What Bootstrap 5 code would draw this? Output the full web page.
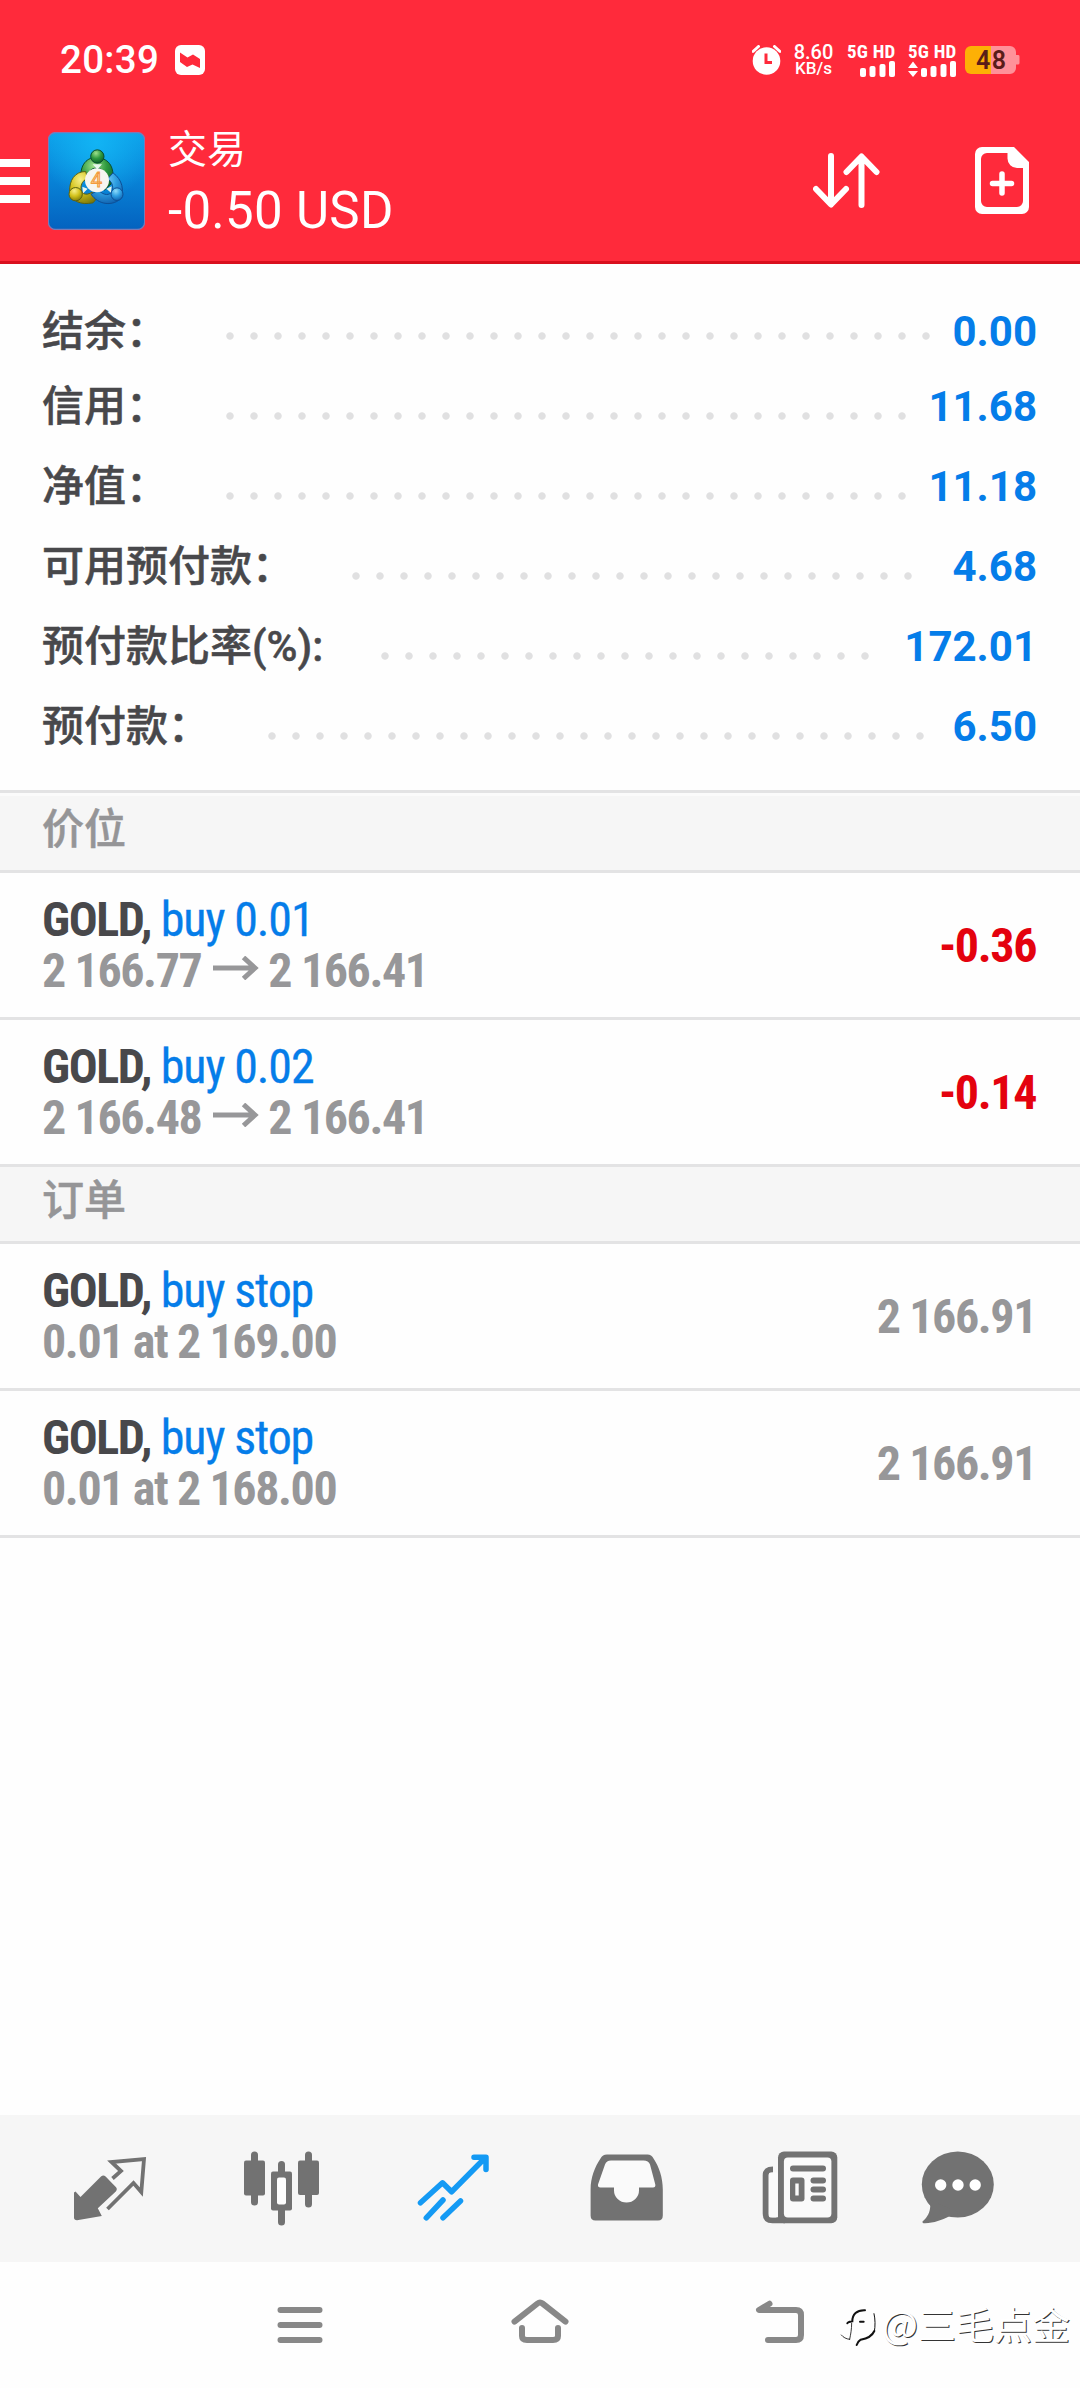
<!DOCTYPE html>
<html lang="zh-CN">
<head>
<meta charset="utf-8">
<meta name="viewport" content="width=device-width, initial-scale=1">
<title>交易</title>
<link href="https://cdn.jsdelivr.net/npm/bootstrap@5.3.0/dist/css/bootstrap.min.css" rel="stylesheet">
<style>
  :root { --brand: #ff2a3b; --ink: #48484b; --muted: #979799; --blue: #057de9; --line: #e3e3e4; --panel: #f6f6f6; }
  body { font-family: Roboto, "Noto Sans CJK SC", sans-serif; background: #fefefe; color: var(--ink); }
  svg { display: block; flex: none; }
  .app-head { background: var(--brand); height: 264px; border-bottom: 3px solid #d90f1e; }
  .status { height: 110px; padding: 9px 60px 0; }
  .clock { font-size: 38.5px; line-height: 40px; font-weight: 500; letter-spacing: .3px; margin-right: 16px; }
  .net { width: 41px; margin: 0 13px 0 12px; font-size: 20px; line-height: 16px; font-weight: 500; }
  .net-unit { font-size: 17px; line-height: 16px; }
  .sig { width: 49px; font-family: "Roboto Condensed", Roboto, sans-serif; font-size: 19px; letter-spacing: .2px; line-height: 17px; font-weight: 700; }
  .sig svg { margin-top: 1px; }
  .toolbar { height: 141px; padding-right: 51px; }
  .app-logo { margin: 0 23px 0 18px; }
  .new-order { margin-left: 95px; }
  .title-a { font-size: 39px; height: 60px; line-height: 68px; }
  .title-b { font-size: 51px; line-height: 69px; letter-spacing: .3px; }

  .account { padding: 43px 43px 8px 42px; height: 526px; font-size: 42px; line-height: 50px; }
  .acct-row { height: 80px; font-weight: 500; }
  .acct-row:first-child { height: 75px; }
  .acct-name, .sect { -webkit-text-stroke: .5px currentColor; }
  .leader { height: 8px; margin: 30px 0 0 50px; width: calc(var(--n) * 24px);
    background: radial-gradient(circle at center, #e0e0e1 3.3px, transparent 4.1px) 0 0 / 24px 8px repeat-x; }
  .acct-row:first-child .leader { margin-top: 25px; }
  .acct-val { color: var(--blue); font-weight: 700; }

  .sect { background: var(--panel); border-bottom: 3px solid var(--line); height: 77px; padding: 13px 42px 0; font-size: 42px; line-height: 42px; color: #959597; font-weight: 500; }
  .sect-first { border-top: 3px solid #fbfbfb; height: 80px; }
  .deal { height: 147px; padding: 0 44px 0 42px; border-bottom: 3px solid var(--line); font-family: "Roboto Condensed", Roboto, sans-serif; font-size: 48px; line-height: 51px; font-weight: 700; letter-spacing: -1.4px; }
  .side { color: var(--blue); font-weight: 400; letter-spacing: -1.1px; -webkit-text-stroke: .3px currentColor; }
  .price { color: var(--muted); }
  .loss { color: #e4020e; }
  .arrow { display: inline-block; margin: 0 9px 7px 12px; vertical-align: baseline; }

  .tabs { background: var(--panel); height: 147px; padding: 0 24px; }
  .tabs svg { width: 86px; height: 86px; }
  .sysnav { height: 126px; }
  .sysnav .key { width: 240px; }
  .wm { right: 10px; top: 36px; font-size: 38px; line-height: 50px; color: #fff; text-shadow: 1px 1px 0 #333; font-family: "Noto Sans CJK SC", sans-serif; font-weight: 400; }
</style>
</head>
<body class="d-flex flex-column min-vh-100 m-0">

<header class="app-head text-white">
  <div class="status d-flex align-items-center">
    <span class="clock">20:39</span>
    <svg width="30" height="30" viewBox="0 0 30 30"><rect width="30" height="30" rx="6" fill="#fff"/><path d="M5 7.500L12.500 12.500 18 9.500 25 14V23L17.500 19.500 12 22 5 17Z" fill="#ff2a3b"/></svg>
    <svg class="ms-auto" width="29" height="30" viewBox="0 0 29 30"><circle cx="14.500" cy="16" r="13.800" fill="#fff"/><path d="M1 6.500L6.500 1.500M28 6.500L22.500 1.500" stroke="#fff" stroke-width="3" stroke-linecap="round"/><path d="M14 8.500V17.500H20" fill="none" stroke="#ff2a3b" stroke-width="3"/></svg>
    <div class="net text-center">8.60<div class="net-unit">KB/s</div></div>
    <div class="sig text-nowrap me-2">5G HD
      <svg width="49" height="16" viewBox="0 0 49 16" fill="#fff"><rect x="13" y="7" width="6" height="9" rx="2"/><rect x="22.500" y="5" width="6" height="11" rx="2"/><rect x="32.500" y="3" width="6" height="13" rx="2"/><rect x="42" y="0" width="6" height="16" rx="2"/></svg>
    </div>
    <div class="sig text-nowrap ms-1">5G HD
      <svg width="49" height="16" viewBox="0 0 49 16" fill="#fff"><path d="M0 7L5 0.500 10 7ZM0 10L5 16 10 10Z"/><rect x="13" y="7" width="6" height="9" rx="2"/><rect x="22.500" y="5" width="6" height="11" rx="2"/><rect x="32.500" y="3" width="6" height="13" rx="2"/><rect x="42" y="0" width="6" height="16" rx="2"/></svg>
    </div>
    <svg class="ms-2" width="55" height="28" viewBox="0 0 55 28"><path d="M6 0H26V28H6A6 6 0 0 1 0 22V6A6 6 0 0 1 6 0Z" fill="#fdb005"/><path d="M26 0H45A6 6 0 0 1 51 6V9H53A1.500 1.500 0 0 1 54.500 10.500V17A1.500 1.500 0 0 1 53 18.500H51V22A6 6 0 0 1 45 28H26Z" fill="#ff9199"/><text x="26" y="22.500" text-anchor="middle" font-family="Roboto" font-size="25" font-weight="600" textLength="30" fill="#5a1d18">48</text></svg>
  </div>

  <div class="toolbar d-flex align-items-center">
    <svg width="30" height="44" viewBox="0 0 30 44" fill="#fff"><path d="M0 0H30V8H0ZM0 18H30V26H0ZM0 36H30V44H0Z"/></svg>
    <svg class="app-logo" width="97" height="98" viewBox="53 64 291 293">
      <defs>
        <linearGradient id="bg" x1="0" y1="0" x2="0" y2="1"><stop offset="0" stop-color="#0d9fe8"/><stop offset=".5" stop-color="#0882d6"/><stop offset="1" stop-color="#0462bf"/></linearGradient>
        <radialGradient id="glow" cx=".5" cy=".1" r=".6"><stop offset="0" stop-color="#12b4f4"/><stop offset="1" stop-color="#12b4f4" stop-opacity="0"/></radialGradient>
        <radialGradient id="gr" cx=".4" cy=".25" r=".8"><stop offset="0" stop-color="#9fe08c"/><stop offset=".5" stop-color="#2f9a3f"/><stop offset="1" stop-color="#0c5c26"/></radialGradient>
        <radialGradient id="ye" cx=".4" cy=".25" r=".8"><stop offset="0" stop-color="#f7f08a"/><stop offset=".5" stop-color="#d3c21b"/><stop offset="1" stop-color="#7d7a0c"/></radialGradient>
        <radialGradient id="bl" cx=".4" cy=".25" r=".8"><stop offset="0" stop-color="#8fdcfb"/><stop offset=".5" stop-color="#2f9fe2"/><stop offset="1" stop-color="#0f5fae"/></radialGradient>
      </defs>
      <rect x="54" y="65" width="289" height="291" rx="22" fill="url(#bg)"/>
      <rect x="54" y="65" width="289" height="291" rx="22" fill="url(#glow)" stroke="#7a7ab8" stroke-width="4"/>
      <path d="M152 210C146 160 172 138 200 140S256 160 246 216L222 238C232 196 222 172 200 172S176 182 176 206Z" fill="url(#gr)" stroke="#0a4f30" stroke-width="3"/>
      <path d="M166 182C134 182 116 208 118 244 124 270 150 284 188 276L200 262 186 244C166 256 150 250 152 228 154 214 162 206 172 204Z" fill="url(#ye)" stroke="#5c6212" stroke-width="3"/>
      <path d="M248 186C276 206 284 240 268 266 244 286 204 282 182 250L204 238C220 254 238 256 246 240 250 226 244 212 232 204Z" fill="url(#bl)" stroke="#0d4f96" stroke-width="3"/>
      <path d="M187 160H215L201 176ZM156 228L172 234 158 248ZM244 226L228 234 242 246Z" fill="#e8f6ee"/>
      <ellipse cx="201" cy="137" rx="20" ry="20" fill="url(#gr)" stroke="#0a4f30" stroke-width="3"/>
      <ellipse cx="136" cy="250" rx="20" ry="20" fill="url(#ye)" stroke="#5c6212" stroke-width="3"/>
      <ellipse cx="260" cy="250" rx="18" ry="19" fill="url(#bl)" stroke="#0d4f96" stroke-width="3"/>
      <circle cx="200" cy="208" r="36" fill="#f7f5f0"/>
      <text x="198" y="229" text-anchor="middle" font-family="Roboto" font-size="60" fill="#ffd9a0" stroke="#f39a3c" stroke-width="3">4</text>
    </svg>
    <div>
      <div class="title-a">交易</div>
      <div class="title-b">-0.50 USD</div>
    </div>
    <svg class="ms-auto" width="67" height="55" viewBox="0 0 67 55" fill="none" stroke="#fff" stroke-width="6" stroke-linecap="round" stroke-linejoin="round"><path d="M18 3V51M3 36L18 51.500 33 36M48.500 52V4M33.500 19L48.500 3.500 63.500 19"/></svg>
    <svg class="new-order" width="54" height="67" viewBox="0 0 54 67"><path d="M7 0H39L54 15V60A7 7 0 0 1 47 67H7A7 7 0 0 1 0 60V7A7 7 0 0 1 7 0ZM12 6A6 6 0 0 0 6 12V54A6 6 0 0 0 12 60H42A6 6 0 0 0 48 54V21H42A9.500 9.500 0 0 1 32.500 11.500V6Z" fill="#fff" fill-rule="evenodd"/><path d="M27 27V46M17.500 36.500H36.500" stroke="#fff" stroke-width="5.500" stroke-linecap="round"/></svg>
  </div>
</header>

<main class="flex-grow-1">
  <section class="account">
    <div class="acct-row d-flex align-items-baseline"><span class="acct-name">结余：</span><i class="leader align-self-start" style="--n:30"></i><span class="acct-val ms-auto">0.00</span></div>
    <div class="acct-row d-flex align-items-baseline"><span class="acct-name">信用：</span><i class="leader align-self-start" style="--n:29"></i><span class="acct-val ms-auto">11.68</span></div>
    <div class="acct-row d-flex align-items-baseline"><span class="acct-name">净值：</span><i class="leader align-self-start" style="--n:29"></i><span class="acct-val ms-auto">11.18</span></div>
    <div class="acct-row d-flex align-items-baseline"><span class="acct-name">可用预付款：</span><i class="leader align-self-start" style="--n:24"></i><span class="acct-val ms-auto">4.68</span></div>
    <div class="acct-row d-flex align-items-baseline"><span class="acct-name">预付款比率(%):</span><i class="leader align-self-start" style="--n:21"></i><span class="acct-val ms-auto">172.01</span></div>
    <div class="acct-row d-flex align-items-baseline"><span class="acct-name">预付款：</span><i class="leader align-self-start" style="--n:28"></i><span class="acct-val ms-auto">6.50</span></div>
  </section>

  <section class="list-group list-group-flush" style="border-top:3px solid var(--line)">
    <div class="sect sect-first">价位</div>
    <div class="deal d-flex align-items-center justify-content-between">
      <div><div>GOLD, <span class="side">buy 0.01</span></div>
        <div class="price">2 166.77<svg class="arrow" width="46" height="24" viewBox="0 0 46 24" fill="none" stroke="#979799" stroke-width="5" role="img" aria-label="→"><path d="M0 12H42M30.500 1.500L42 12 30.500 22.500"/></svg>2 166.41</div></div>
      <div class="loss">-0.36</div>
    </div>
    <div class="deal d-flex align-items-center justify-content-between">
      <div><div>GOLD, <span class="side">buy 0.02</span></div>
        <div class="price">2 166.48<svg class="arrow" width="46" height="24" viewBox="0 0 46 24" fill="none" stroke="#979799" stroke-width="5" role="img" aria-label="→"><path d="M0 12H42M30.500 1.500L42 12 30.500 22.500"/></svg>2 166.41</div></div>
      <div class="loss">-0.14</div>
    </div>
    <div class="sect">订单</div>
    <div class="deal d-flex align-items-center justify-content-between">
      <div><div>GOLD, <span class="side">buy stop</span></div><div class="price">0.01 at 2 169.00</div></div>
      <div class="price">2 166.91</div>
    </div>
    <div class="deal d-flex align-items-center justify-content-between">
      <div><div>GOLD, <span class="side">buy stop</span></div><div class="price">0.01 at 2 168.00</div></div>
      <div class="price">2 166.91</div>
    </div>
  </section>
</main>

<nav class="tabs d-flex align-items-center justify-content-around">
  <!-- quotes -->
  <svg viewBox="67 45.500 86 86"><path d="M75.500 91L80.500 96.500 101 76Q103.300 74 105.600 76L115.800 86.500Q117.800 88.700 115.800 91L97.800 107.700 101.800 115.500 77 119.800Q74 119.800 74 117V92Z" fill="#727272"/><path d="M112.500 78L121 70.500 111.500 61.500 144 58.700 141.300 91.500 133.500 82.500 107.500 108.500" fill="none" stroke="#727272" stroke-width="3.800"/></svg>
  <!-- chart -->
  <svg viewBox="239 45.500 86 86" fill="#727272"><rect x="244" y="60" width="21" height="35" rx="2"/><rect x="251" y="51" width="7" height="54" rx="3.500"/><rect x="298" y="60" width="21" height="34.500" rx="2"/><rect x="305" y="51" width="7" height="56" rx="3.500"/><rect x="278" y="60.500" width="7" height="64.500" rx="3.500"/><rect x="271" y="71" width="21" height="39" rx="2"/><rect x="277" y="77" width="9" height="27" rx="2" fill="#fdfdfd"/></svg>
  <!-- trade -->
  <svg viewBox="411 45.500 86 86" fill="none" stroke="#149af4" stroke-width="5.500" stroke-linecap="round" stroke-linejoin="round"><path d="M420.500 102.300L442.500 82.300 451.600 91.300 485.500 57M474 56.700H486V69M443 99.500L426.300 117.300M460.500 100.500L443 117.300"/></svg>
  <!-- history -->
  <svg viewBox="583 45.500 86 86"><path d="M607 54H647.500Q651.500 54 653.500 58C659 66 662.800 77 662.800 89V115Q662.800 120 658 120H595.500Q590.600 120 590.600 115V89C590.600 77 595 66 600.500 58Q602.500 54 607 54Z" fill="#727272"/><path d="M611 60H643.500Q648.500 60 650 64L655.300 84Q655.800 87 653 87H639V90A12.500 12 0 0 1 614 90V87H600.500Q597.500 87 598 84L605 64Q606.500 60 611 60Z" fill="#fafafa"/></svg>
  <!-- news -->
  <svg viewBox="755 45.500 86 86"><path d="M773 69Q765.700 69 765.700 75V113Q765.700 119.800 772.500 119.800H785" fill="none" stroke="#727272" stroke-width="6"/><rect x="768.700" y="72" width="9" height="45" rx="2" fill="#fafafa"/><rect x="778" y="51" width="59.300" height="71.800" rx="6" fill="#727272"/><rect x="783.900" y="57" width="47.500" height="60" rx="4" fill="#fafafa"/><path d="M793 68H823M813.500 80H823M813.500 89H823M813.500 98H823" stroke="#727272" stroke-width="6" stroke-linecap="round"/><rect x="790" y="77" width="14.500" height="24" rx="3" fill="#727272"/><rect x="795.300" y="83" width="3.400" height="12" fill="#fafafa"/></svg>
  <!-- messages -->
  <svg viewBox="927 45.500 86 86" overflow="visible"><ellipse cx="957.800" cy="84" rx="36" ry="33" fill="#727272"/><path d="M926 98L930.300 105C930 112 928 116 922.500 121Q922 123 925 122.800C934 122.500 942 119.500 949 116L960 112Z" fill="#727272"/><circle cx="940.700" cy="84.500" r="5.700" fill="#fff"/><circle cx="958" cy="84.500" r="5.700" fill="#fff"/><circle cx="975.200" cy="84.500" r="5.700" fill="#fff"/></svg>
</nav>

<footer class="sysnav d-flex justify-content-center align-items-center position-relative">
  <div class="key d-flex justify-content-center"><svg width="60" height="60" viewBox="270 195 60 60" stroke="#888" stroke-width="6" stroke-linecap="round"><path d="M280.500 210H319.500M280.500 225H319.500M280.500 240H319.500"/></svg></div>
  <div class="key d-flex justify-content-center"><svg width="60" height="60" viewBox="510 195 60 60" fill="none" stroke="#888" stroke-width="6" stroke-linecap="round" stroke-linejoin="round"><path d="M514.500 221.700L537.500 203.500Q540 201.600 542.500 203.500L565.500 221.700M522 228V236Q522 240 527 240H553Q558 240 558 236V228"/></svg></div>
  <div class="key d-flex justify-content-center"><svg width="60" height="60" viewBox="750 195 60 60" fill="none" stroke="#888" stroke-width="6" stroke-linecap="round" stroke-linejoin="round"><path d="M769.500 203.700L759 210H796Q801 210 801 215V235Q801 240 796 240H768"/></svg></div>
  <div class="wm position-absolute d-flex align-items-center">
    <!-- note mark: only its shaded edges show on the white bar -->
    <svg class="me-1 mt-2" width="38" height="40" viewBox="62 68 114 120" fill="none" stroke="#111" stroke-linecap="round"><path d="M84 117C85 112 90 112 99 111 99 90 112 77 137 78M122 112H133" stroke-width="6"/><path d="M97 117C97 135 94 150 91 165M66 152C72 159 80 164 91 165" stroke-width="2.500"/><path d="M164 88C168 105 168 125 165 142" stroke-width="3"/><path d="M165 140C158 156 142 163 124 166 117 170 114 176 112 182" stroke-width="6"/></svg>
    <span>@三毛点金</span>
  </div>
</footer>

<script src="https://cdn.jsdelivr.net/npm/bootstrap@5.3.0/dist/js/bootstrap.bundle.min.js"></script>
</body>
</html>
